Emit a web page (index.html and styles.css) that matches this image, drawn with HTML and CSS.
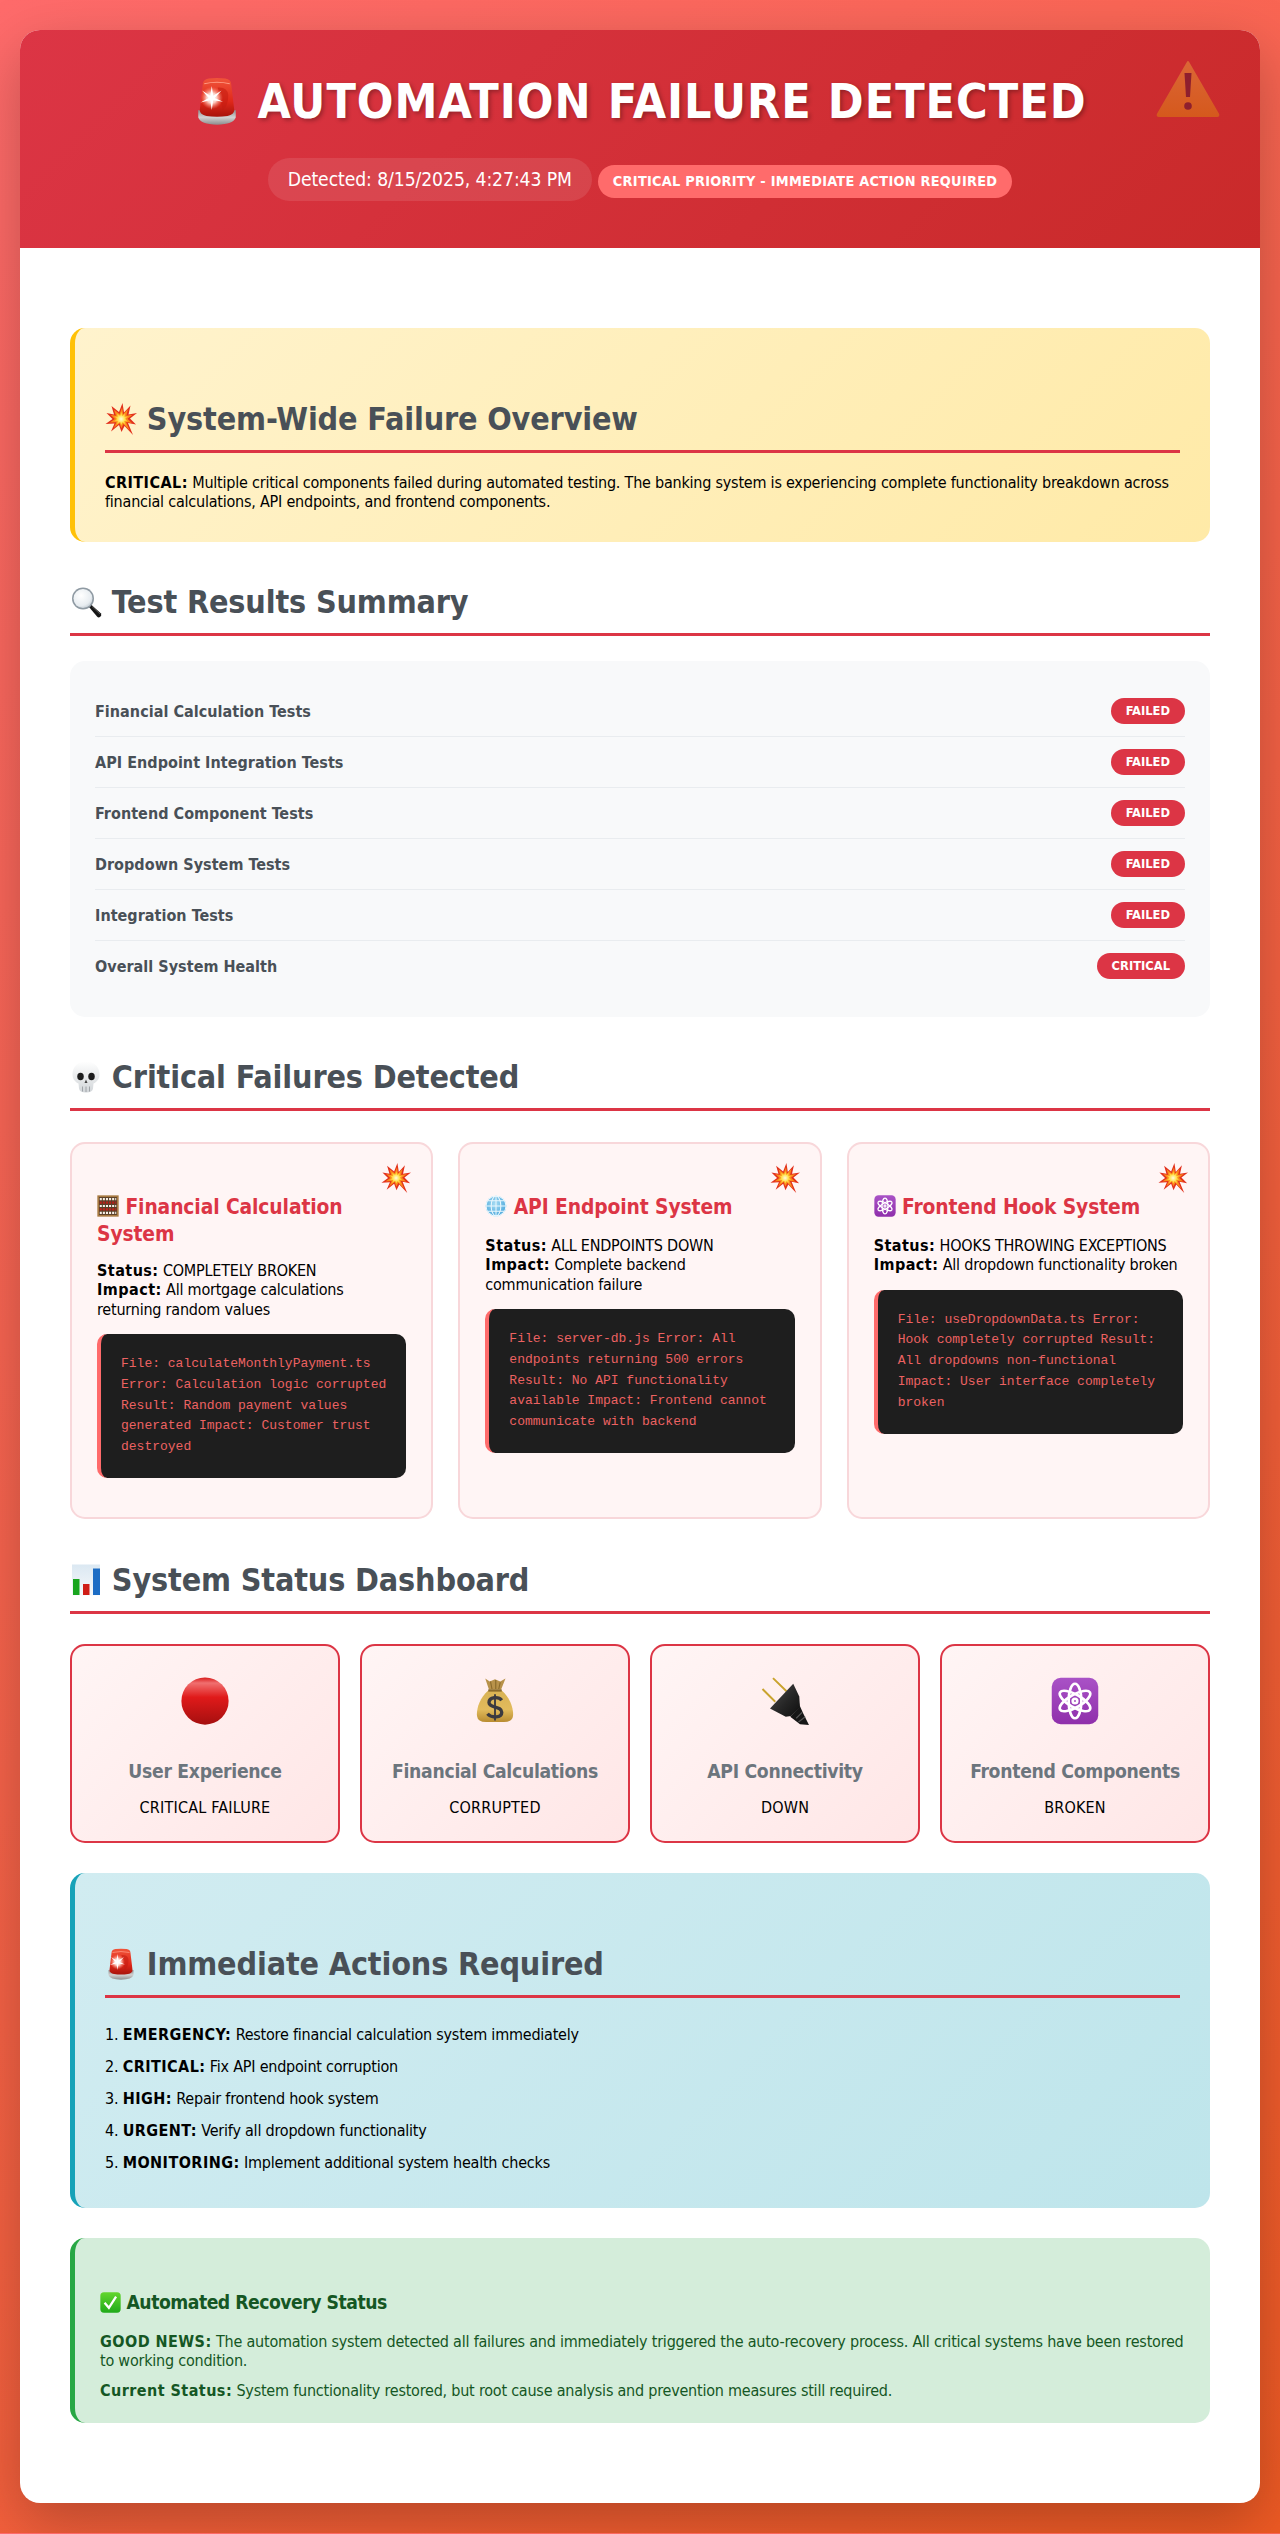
FILE: index.html
```html
<!DOCTYPE html>
<html lang="en">
<head>
<meta charset="utf-8">
<title>Automation Failure Detected</title>
<link rel="stylesheet" href="styles.css">
</head>
<body>
<svg class="sprite" aria-hidden="true">
  <defs>
    <linearGradient id="g-siren" x1="0" y1="0" x2="0" y2="1"><stop offset="0" stop-color="#f0553a"/><stop offset=".6" stop-color="#e0281a"/><stop offset="1" stop-color="#a8130b"/></linearGradient>
    <linearGradient id="g-base" x1="0" y1="0" x2="0" y2="1"><stop offset="0" stop-color="#8a8a8a"/><stop offset=".5" stop-color="#d2d2d2"/><stop offset="1" stop-color="#8d8d8d"/></linearGradient>
    <radialGradient id="g-flash"><stop offset="0" stop-color="#fff"/><stop offset=".45" stop-color="#ffe3da" stop-opacity=".9"/><stop offset="1" stop-color="#ff8a70" stop-opacity="0"/></radialGradient>
    <radialGradient id="g-boom"><stop offset="0" stop-color="#fffbe0"/><stop offset=".5" stop-color="#ffe14a"/><stop offset="1" stop-color="#ff9a1e"/></radialGradient>
    <radialGradient id="g-glass" cx=".4" cy=".35" r=".75"><stop offset="0" stop-color="#fff"/><stop offset=".7" stop-color="#e8edf1"/><stop offset="1" stop-color="#b9c3cb"/></radialGradient>
    <linearGradient id="g-skull" x1="0" y1="0" x2="0" y2="1"><stop offset="0" stop-color="#fff"/><stop offset="1" stop-color="#d2d6d9"/></linearGradient>
    <radialGradient id="g-globe" cx=".45" cy=".4" r=".7"><stop offset="0" stop-color="#a6dcf3"/><stop offset="1" stop-color="#3f9fd8"/></radialGradient>
    <linearGradient id="g-atom" x1="0" y1="0" x2="0" y2="1"><stop offset="0" stop-color="#a952c6"/><stop offset="1" stop-color="#8f2fab"/></linearGradient>
    <linearGradient id="g-chart" x1="0" y1="0" x2="0" y2="1"><stop offset="0" stop-color="#dbe8f2"/><stop offset="1" stop-color="#f6f8fa"/></linearGradient>
    <linearGradient id="g-red" x1="0" y1="0" x2="0" y2="1"><stop offset="0" stop-color="#d81818"/><stop offset=".12" stop-color="#f07070"/><stop offset=".42" stop-color="#e01a1a"/><stop offset="1" stop-color="#a50f0f"/></linearGradient>
    <linearGradient id="g-sack" x1="0" y1="0" x2="0" y2="1"><stop offset="0" stop-color="#d8b254"/><stop offset=".6" stop-color="#e2bb5c"/><stop offset="1" stop-color="#b98c30"/></linearGradient>
    <linearGradient id="g-plug" x1="0" y1="0" x2="1" y2="1"><stop offset="0" stop-color="#4c4c4c"/><stop offset=".55" stop-color="#262626"/><stop offset="1" stop-color="#0e0e0e"/></linearGradient>
    <linearGradient id="g-check" x1="0" y1="0" x2="0" y2="1"><stop offset="0" stop-color="#63d62e"/><stop offset="1" stop-color="#1faa1a"/></linearGradient>
    <linearGradient id="g-warn" x1="0" y1="0" x2="0" y2="1"><stop offset="0" stop-color="#db6636"/><stop offset="1" stop-color="#d5591d"/></linearGradient>
    <path id="p-boom" d="M35 0 L38 19 L51 5 L47 23 L64 20 L50 31 L62 43 L46 40 L56 64 L39 46 L33 58 L28 44 L12 57 L19 41 L1 42 L15 32 L3 20 L18 23 L13 6 L28 18 Z"/>
  </defs>
  <symbol id="i-siren" viewBox="0 0 64 64">
    <path d="M7 44 Q32 52 57 44 L57 54 Q54 63 32 63.500 Q10 63 7 54 Z" fill="url(#g-base)"/>
    <path d="M13 10 Q13 3 21 2 Q32 .5 43 2 Q51 3 51 10 L55 44 Q55 50 46 52 Q32 54 18 52 Q9 50 9 44 Z" fill="url(#g-siren)"/>
    <path d="M15 9 Q32 5 49 9" fill="none" stroke="#ff9a84" stroke-width="1.500"/>
    <path d="M33 14 Q46 13 47 24 Q47 38 40 44 Q36 30 33 14 Z" fill="#c21c10" opacity=".55"/>
    <circle cx="25" cy="28" r="15" fill="url(#g-flash)"/>
    <path d="M25 12 L27 25 L38 18 L29 28 L40 33 L27 31 L25 44 L23 31 L10 34 L21 28 L12 18 L23 25 Z" fill="#fff"/>
  </symbol>
  <symbol id="i-boom" viewBox="0 0 64 64">
    <use href="#p-boom" fill="#e2301c"/>
    <use href="#p-boom" fill="#fb8a1a" transform="translate(32 32) scale(.72) translate(-32 -32)"/>
    <use href="#p-boom" fill="url(#g-boom)" transform="translate(32 32) scale(.48) translate(-32 -32)"/>
  </symbol>
  <symbol id="i-search" viewBox="0 0 64 64">
    <path d="M38 42 L42 37 L62 55 Q64 59 60 62 Q57 64 54 61 Z" fill="#151515"/>
    <path d="M44 41 L60 56" stroke="#666" stroke-width="1.500"/>
    <circle cx="26" cy="25" r="22" fill="#8f9aa3"/>
    <circle cx="26" cy="25" r="19" fill="url(#g-glass)"/>
  </symbol>
  <symbol id="i-skull" viewBox="0 0 64 64">
    <path d="M32 1 C14 1 5 13 5 27 C5 37 11 42 17 45 L18 55 Q19 63 32 63 Q45 63 46 55 L47 45 C53 42 59 37 59 27 C59 13 50 1 32 1 Z" fill="url(#g-skull)"/>
    <ellipse cx="21" cy="31" rx="6.500" ry="7.500" fill="#1d1d1d"/>
    <ellipse cx="43" cy="31" rx="6.500" ry="7.500" fill="#1d1d1d"/>
    <path d="M32 37 L35 44 H29 Z" fill="#444"/>
    <path d="M25 51 V61 M32 51 V62 M39 51 V61" stroke="#8d9297" stroke-width="1.500"/>
  </symbol>
  <symbol id="i-abacus" viewBox="0 0 64 64">
    <rect x="1" y="1" width="62" height="62" fill="#a87a42"/>
    <rect x="6" y="6" width="52" height="52" fill="#5a3f29"/>
    <g fill="none" stroke-width="6.500" stroke-dasharray="6 3">
      <path d="M8 12 H56" stroke="#f4ece2"/>
      <path d="M8 22 H56" stroke="#b81f18"/>
      <path d="M8 32 H56" stroke="#f7f1e8"/>
      <path d="M8 42 H56" stroke="#c62119"/>
      <path d="M8 52 H56" stroke="#f7f1e8"/>
    </g>
  </symbol>
  <symbol id="i-globe" viewBox="0 0 64 64">
    <circle cx="32" cy="32" r="30" fill="url(#g-globe)"/>
    <g fill="none" stroke="#eaf7fd" stroke-width="3">
      <circle cx="32" cy="32" r="29"/>
      <ellipse cx="32" cy="32" rx="14" ry="29"/>
      <path d="M32 3 V61 M3 32 H61 M8 17 H56 M8 47 H56"/>
    </g>
  </symbol>
  <symbol id="i-atom" viewBox="0 0 64 64">
    <rect x="1" y="1" width="62" height="62" rx="12" fill="url(#g-atom)"/>
    <g fill="none" stroke="#fff" stroke-width="3.600">
      <ellipse cx="32" cy="32" rx="8.500" ry="23"/>
      <ellipse cx="32" cy="32" rx="8.500" ry="23" transform="rotate(60 32 32)"/>
      <ellipse cx="32" cy="32" rx="8.500" ry="23" transform="rotate(120 32 32)"/>
      <circle cx="32" cy="32" r="3"/>
    </g>
  </symbol>
  <symbol id="i-chart" viewBox="0 0 64 64">
    <rect x="4" y="1" width="56" height="62" fill="url(#g-chart)"/>
    <rect x="6" y="30" width="13" height="32" fill="#19a51f"/>
    <rect x="26" y="40" width="13" height="22" fill="#cf1d16"/>
    <rect x="46" y="9" width="14" height="53" fill="#1c6cc4"/>
  </symbol>
  <symbol id="i-red" viewBox="0 0 64 64">
    <circle cx="32" cy="32" r="31.500" fill="url(#g-red)"/>
  </symbol>
  <symbol id="i-sack" viewBox="0 0 64 64">
    <path d="M19 2 L25 6 L32 3 L39 6 L46 2 L40 17 H24 Z" fill="#b8924a"/>
    <path d="M26 6 L28 16 M33 4 V16 M39 7 L37 16" stroke="#8a6a2c" stroke-width="1.500"/>
    <path d="M23 18 C11 28 7 44 8 52 Q9 60 20 60 H44 Q55 60 56 52 C57 44 53 28 41 18 Z" fill="url(#g-sack)"/>
    <path d="M23 18 H41" stroke="#8a6a2c" stroke-width="3"/>
    <path d="M41 31 C37 26 24 26 24 34 C24 42 41 38 41 47 C41 55 27 55 22 49" fill="none" stroke="#3b3a40" stroke-width="4.500"/>
    <path d="M32 23 V58" stroke="#3b3a40" stroke-width="2.500"/>
  </symbol>
  <symbol id="i-plug" viewBox="0 0 64 64">
    <path d="M16 1.500 L34 19 M2 16 L19 33" stroke="#c9a32e" stroke-width="2.600"/>
    <path d="M43 9 L12 42 L33 53 L40 52 L52 40 L51 26 Z" fill="url(#g-plug)"/>
    <path d="M39 53 L52 39 L56 48 L64 64 L52 63 Z" fill="#161616"/>
    <path d="M47 55 L55 47 M50 60 L59 53" stroke="#555" stroke-width="1.500"/>
  </symbol>
  <symbol id="i-check" viewBox="0 0 64 64">
    <rect x="1" y="1" width="62" height="62" rx="11" fill="url(#g-check)"/>
    <path d="M14 33 L27 48 L49 14" fill="none" stroke="#fff" stroke-width="7"/>
  </symbol>
  <symbol id="i-warn" viewBox="0 0 64 57">
    <path d="M32 2 L62 54 Q63 56 61 56 H3 Q1 56 2 54 Z" fill="url(#g-warn)" stroke="url(#g-warn)" stroke-width="2" stroke-linejoin="round"/>
    <path d="M28.500 13 H35.500 L34 37 H30 Z" fill="#8e1f2e"/>
    <circle cx="32" cy="46" r="3.800" fill="#8e1f2e"/>
  </symbol>
</svg>
<div class="container">
  <header class="header">
    <svg class="header-warning" role="img" aria-label="Warning"><use href="#i-warn"/></svg>
    <h1><svg class="emoji emoji-h1" role="img" aria-label="Siren"><use href="#i-siren"/></svg> AUTOMATION FAILURE DETECTED</h1>
    <div class="header-meta">
      <span class="timestamp">Detected: 8/15/2025, 4:27:43 PM</span>
      <span class="priority">Critical Priority - Immediate Action Required</span>
    </div>
  </header>
  <main class="content">
    <section class="callout callout-warning">
      <h2 class="section-title"><svg class="emoji emoji-h2" role="img" aria-label="Collision"><use href="#i-boom"/></svg> System-Wide Failure Overview</h2>
      <p><strong>CRITICAL:</strong> Multiple critical components failed during automated testing. The banking system is experiencing complete functionality breakdown across financial calculations, API endpoints, and frontend components.</p>
    </section>
    <section class="section section-results">
      <h2 class="section-title"><svg class="emoji emoji-h2" role="img" aria-label="Magnifier"><use href="#i-search"/></svg> Test Results Summary</h2>
      <div class="results">
        <div class="result-row"><span class="result-label">Financial Calculation Tests</span><span class="badge">Failed</span></div>
        <div class="result-row"><span class="result-label">API Endpoint Integration Tests</span><span class="badge">Failed</span></div>
        <div class="result-row"><span class="result-label">Frontend Component Tests</span><span class="badge">Failed</span></div>
        <div class="result-row"><span class="result-label">Dropdown System Tests</span><span class="badge">Failed</span></div>
        <div class="result-row"><span class="result-label">Integration Tests</span><span class="badge">Failed</span></div>
        <div class="result-row"><span class="result-label">Overall System Health</span><span class="badge">Critical</span></div>
      </div>
    </section>
    <section class="section section-failures">
      <h2 class="section-title"><svg class="emoji emoji-h2" role="img" aria-label="Skull"><use href="#i-skull"/></svg> Critical Failures Detected</h2>
      <div class="failure-grid">
        <article class="failure-card">
          <svg class="card-boom" role="img" aria-label="Collision"><use href="#i-boom"/></svg>
          <h3><svg class="emoji emoji-h3" role="img" aria-label="Abacus"><use href="#i-abacus"/></svg> Financial Calculation System</h3>
          <p><strong>Status:</strong> COMPLETELY BROKEN<br><strong>Impact:</strong> All mortgage calculations returning random values</p>
          <div class="code">File: calculateMonthlyPayment.ts Error: Calculation logic corrupted Result: Random payment values generated Impact: Customer trust destroyed</div>
        </article>
        <article class="failure-card">
          <svg class="card-boom" role="img" aria-label="Collision"><use href="#i-boom"/></svg>
          <h3><svg class="emoji emoji-h3" role="img" aria-label="Globe"><use href="#i-globe"/></svg> API Endpoint System</h3>
          <p><strong>Status:</strong> ALL ENDPOINTS DOWN<br><strong>Impact:</strong> Complete backend communication failure</p>
          <div class="code">File: server-db.js Error: All endpoints returning 500 errors Result: No API functionality available Impact: Frontend cannot communicate with backend</div>
        </article>
        <article class="failure-card">
          <svg class="card-boom" role="img" aria-label="Collision"><use href="#i-boom"/></svg>
          <h3><svg class="emoji emoji-h3" role="img" aria-label="Atom"><use href="#i-atom"/></svg> Frontend Hook System</h3>
          <p><strong>Status:</strong> HOOKS THROWING EXCEPTIONS<br><strong>Impact:</strong> All dropdown functionality broken</p>
          <div class="code">File: useDropdownData.ts Error: Hook completely corrupted Result: All dropdowns non-functional Impact: User interface completely broken</div>
        </article>
      </div>
    </section>
    <section class="section section-status">
      <h2 class="section-title"><svg class="emoji emoji-h2" role="img" aria-label="Chart"><use href="#i-chart"/></svg> System Status Dashboard</h2>
      <div class="status-grid">
        <div class="status-card"><svg class="status-icon" role="img" aria-label="Red circle"><use href="#i-red"/></svg><h4>User Experience</h4><p>CRITICAL FAILURE</p></div>
        <div class="status-card"><svg class="status-icon" role="img" aria-label="Money bag"><use href="#i-sack"/></svg><h4>Financial Calculations</h4><p>CORRUPTED</p></div>
        <div class="status-card"><svg class="status-icon" role="img" aria-label="Plug"><use href="#i-plug"/></svg><h4>API Connectivity</h4><p>DOWN</p></div>
        <div class="status-card"><svg class="status-icon" role="img" aria-label="Atom"><use href="#i-atom"/></svg><h4>Frontend Components</h4><p>BROKEN</p></div>
      </div>
    </section>
    <section class="callout callout-info">
      <h2 class="section-title"><svg class="emoji emoji-h2" role="img" aria-label="Siren"><use href="#i-siren"/></svg> Immediate Actions Required</h2>
      <ol class="actions">
        <li><strong>EMERGENCY:</strong> Restore financial calculation system immediately</li>
        <li><strong>CRITICAL:</strong> Fix API endpoint corruption</li>
        <li><strong>HIGH:</strong> Repair frontend hook system</li>
        <li><strong>URGENT:</strong> Verify all dropdown functionality</li>
        <li><strong>MONITORING:</strong> Implement additional system health checks</li>
      </ol>
    </section>
    <section class="callout callout-success">
      <h3><svg class="emoji emoji-h3s" role="img" aria-label="Check mark"><use href="#i-check"/></svg> Automated Recovery Status</h3>
      <p><strong>GOOD NEWS:</strong> The automation system detected all failures and immediately triggered the auto-recovery process. All critical systems have been restored to working condition.</p>
      <p><strong>Current Status:</strong> System functionality restored, but root cause analysis and prevention measures still required.</p>
    </section>
  </main>
</div>
</body>
</html>
```
FILE: styles.css
```css
* { box-sizing: border-box; }
html, body { margin: 0; padding: 0; }
body {
  font-family: "DejaVu Sans Condensed", "DejaVu Sans", Verdana, sans-serif;
  font-stretch: condensed;
  font-size: 16px;
  line-height: 19.3px;
  letter-spacing: -0.22px;
  padding: 30px 20px;
  color: #000;
  background: linear-gradient(135deg, #ff6b6b, #ee5a24);
}
strong { letter-spacing: 0.45px; }
.sprite { position: absolute; width: 0; height: 0; }
.emoji { display: inline-block; }
.emoji-h1 { width: 48px; height: 48px; vertical-align: -6.5px; }
.emoji-h2 { width: 32px; height: 32px; vertical-align: -4.5px; }
.emoji-h3 {
  box-sizing: content-box;
  width: 22px;
  height: 22px;
  padding-bottom: 5px;
  vertical-align: -8px;
}
.emoji-h3s { width: 21px; height: 21px; vertical-align: -4px; }

.container {
  background: #fff;
  border-radius: 20px;
  overflow: hidden;
  box-shadow: 0 20px 60px rgba(0, 0, 0, 0.25);
}
.header {
  position: relative;
  padding: 40px 30px;
  text-align: center;
  color: #fff;
  background: linear-gradient(135deg, #dc3545, #c92a2a);
}
.header h1 {
  margin: 0 0 26px;
  font-size: 48px;
  line-height: 62px;
  letter-spacing: 1px;
  text-shadow: 2px 2px 4px rgba(0, 0, 0, 0.3);
}
.header-warning {
  position: absolute;
  top: 30px;
  right: 40px;
  width: 64px;
  height: 57px;
}
.header-meta {
  display: flex;
  justify-content: center;
  align-items: baseline;
  gap: 6px;
  margin-bottom: 7px;
}
.timestamp {
  padding: 10px 20px;
  font-size: 19.2px;
  line-height: 23px;
  letter-spacing: -0.1px;
  border-radius: 25px;
  background: rgba(255, 255, 255, 0.1);
}
.priority {
  padding: 8px 15px;
  font-size: 14.4px;
  line-height: 17px;
  letter-spacing: 0.25px;
  font-weight: 700;
  text-transform: uppercase;
  border-radius: 20px;
  background: #ff6b6b;
}

.content { padding: 50px; }
.section { margin-top: 42.5px; }
.section-failures { margin-top: 42px; }
.section-failures .section-title { margin-bottom: 31px; }
.section-status { margin-top: 43.5px; }
.section-status .section-title { margin-bottom: 30px; }
.section-title {
  margin: 0 0 25px;
  padding-bottom: 12px;
  font-size: 32px;
  line-height: 37px;
  letter-spacing: -0.15px;
  color: #495057;
  border-bottom: 3px solid #dc3545;
}
.callout {
  padding: 30px;
  border-radius: 15px;
  border-left: 5px solid;
}
.callout .section-title { margin: 43px 0 20px; }
.callout p { margin: 0; }
.callout-warning {
  margin-top: 30px;
  border-left-color: #ffc107;
  background: linear-gradient(135deg, #fff3cd, #ffeaa7);
}
.callout-info {
  margin-top: 30px;
  border-left-color: #17a2b8;
  background: linear-gradient(135deg, #d1ecf1, #bee5eb);
}
.callout-success {
  margin: 30px 0;
  padding: 25px 25px 23px;
  color: #155724;
  border-left-color: #28a745;
  background: #d4edda;
}
.callout-success h3 {
  margin: 27.5px 0 18px;
  font-size: 19.2px;
  line-height: 23px;
  letter-spacing: -0.5px;
}
.callout-success p + p { margin-top: 10.7px; }

.results {
  padding: 25px;
  border-radius: 15px;
  background: #f8f9fa;
}
.result-row {
  display: flex;
  justify-content: space-between;
  align-items: center;
  padding: 12px 0;
  border-bottom: 1px solid #e9ecef;
}
.result-row:last-child { border-bottom: 0; padding-bottom: 13px; }
.result-label {
  padding-top: 2px;
  font-weight: 700;
  letter-spacing: 0.03px;
  color: #495057;
}
.badge {
  padding: 5px 15px;
  font-size: 12.8px;
  line-height: 16px;
  letter-spacing: 0;
  font-weight: 700;
  text-transform: uppercase;
  color: #fff;
  border-radius: 20px;
  background: #dc3545;
}

.failure-grid {
  display: grid;
  grid-template-columns: repeat(3, 1fr);
  gap: 25px;
}
.failure-card {
  position: relative;
  padding: 25px;
  border: 2px solid #f8d7da;
  border-radius: 15px;
  background: #fff5f5;
}
.card-boom {
  position: absolute;
  top: 19px;
  right: 20px;
  width: 30px;
  height: 30px;
}
.failure-card h3 {
  margin: 26px 0 14px;
  font-size: 20.8px;
  line-height: 25px;
  letter-spacing: -0.1px;
  color: #dc3545;
}
.failure-card p { margin: 0; }
.code {
  margin: 15px 0 14px;
  padding: 20px;
  font-family: "Liberation Mono", "Courier New", monospace;
  font-size: 13px;
  line-height: 20.8px;
  letter-spacing: 0;
  color: #ec6262;
  border-left: 4px solid #ff6b6b;
  border-radius: 10px;
  background: #1e1e1e;
}

.status-grid {
  display: grid;
  grid-template-columns: repeat(4, 1fr);
  gap: 20px;
}
.status-card {
  padding: 25px 25px 24px;
  text-align: center;
  border: 2px solid #dc3545;
  border-radius: 15px;
  background: linear-gradient(135deg, #fff5f5, #ffe6e6);
}
.status-icon {
  display: block;
  width: 48px;
  height: 48px;
  margin: 6px auto 34.5px;
}
.status-card h4 {
  margin: 0 0 15px;
  font-size: 19.2px;
  line-height: 23px;
  letter-spacing: -0.3px;
  color: #6c757d;
}
.status-card p { margin: 0; letter-spacing: 0.2px; }

.actions { margin: 0; padding: 0; list-style-position: inside; }
.actions li { padding: 6.35px 0; }
```
